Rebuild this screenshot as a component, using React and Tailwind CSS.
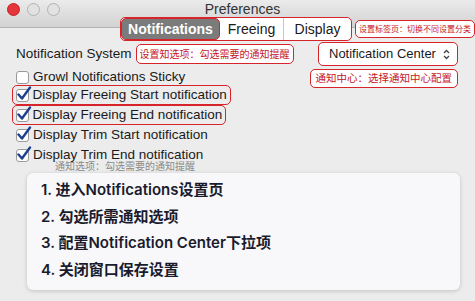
import React from "react";

const FONT = { fontFamily: '"Liberation Sans", "Noto Sans CJK SC", sans-serif' };
const CJK = { fontFamily: '"Noto Sans CJK SC", sans-serif' };
const CARD = { fontFamily: 'Inter, "Noto Sans CJK SC", sans-serif' };

const Check = ({ checked }) => (
  <span className="relative inline-block w-[13px] h-[13px] bg-white border border-[#9a9a9a] rounded-[3px] shrink-0">
    {checked && (
      <svg className="absolute -top-[4px] -left-[1px]" width="16" height="16" viewBox="0 0 16 16">
        <path d="M2.5 8.5 L6 12.5 L14 1.5" fill="none" stroke="#1d3f8f" strokeWidth="2.4" strokeLinecap="round" strokeLinejoin="round" />
      </svg>
    )}
  </span>
);

const Row = ({ label, checked, marked }) => (
  <div
    className={`flex items-center gap-[4px] h-[20px] whitespace-nowrap ${
      marked ? "border-[1.5px] border-[#d7242b] rounded-[5px] -ml-[4px] pl-[2.5px] pr-[3px] w-fit" : ""
    }`}
  >
    <Check checked={checked} />
    <span className="text-[13.5px] text-[#1a1a1a] leading-none">{label}</span>
  </div>
);

const Note = ({ children, className }) => (
  <span
    className={`inline-flex items-center whitespace-nowrap border-[1.5px] border-[#d7242b] rounded-[5px] bg-white text-[#c8161e] leading-none ${className}`}
    style={CJK}
  >
    {children}
  </span>
);

export default function App() {
  const steps = [
    "1. 进入Notifications设置页",
    "2. 勾选所需通知选项",
    "3. 配置Notification Center下拉项",
    "4. 关闭窗口保存设置",
  ];

  return (
    <div className="w-[475px] h-[301px] bg-[#ececec] overflow-hidden" style={FONT}>
      {/* Title bar */}
      <div className="h-[28px] bg-gradient-to-b from-[#ebebeb] to-[#d2d2d2] border-b border-[#b5b5b5] flex items-start pl-[7px] pt-[3px]">
        <div className="flex gap-[7px]">
          <span className="w-[13px] h-[13px] rounded-full bg-[#e5343a] border border-[#c4222a]" />
          <span className="w-[13px] h-[13px] rounded-full bg-[#e2e2e2] border border-[#b2b2b2]" />
          <span className="w-[13px] h-[13px] rounded-full bg-[#e2e2e2] border border-[#b2b2b2]" />
        </div>
        <div className="flex-1 text-center text-[14px] text-[#333] leading-none -mt-[1px] pr-[50px]">Preferences</div>
      </div>

      {/* Tabs */}
      <div className="flex items-center -mt-[11px] pl-[120px]">
        <div className="flex h-[24px] w-[232px] border-[1.5px] border-[#d7242b] rounded-[5px] bg-white overflow-hidden">
          <div className="w-[99px] flex items-center justify-center bg-[#7b7b7b] text-white text-[14px] font-bold border-[1.5px] border-[#d7242b] rounded-[5px]">
            Notifications
          </div>
          <div className="w-[64px] flex items-center justify-center text-[14px] text-[#1a1a1a] border-r border-[#c8c8c8]">
            Freeing
          </div>
          <div className="flex-1 flex items-center justify-center text-[14px] text-[#1a1a1a]">Display</div>
        </div>
        <Note className="ml-[3px] h-[18px] px-[3px] text-[8px]">设置标签页：切换不同设置分类</Note>
      </div>

      {/* Notification system */}
      <div className="flex items-center mt-[1px] pl-[16px] pr-[17px] h-[24px]">
        <span className="text-[13.5px] text-[#1a1a1a] whitespace-nowrap">Notification System</span>
        <Note className="ml-[4px] h-[20px] px-[3px] text-[10px]">设置知选项：勾选需要的通知提醒</Note>
        <div className="ml-auto w-[140px] h-[24px] flex items-center justify-between pl-[10px] pr-[7px] bg-white border-[1.5px] border-[#d7242b] rounded-[5px] text-[13px] text-[#1a1a1a] whitespace-nowrap">
          <span>Notification Center</span>
          <svg width="7" height="11" viewBox="0 0 7 11">
            <path d="M1 4 L3.5 1.5 L6 4 M1 7 L3.5 9.5 L6 7" fill="none" stroke="#444" strokeWidth="1.3" />
          </svg>
        </div>
      </div>

      {/* Checkboxes */}
      <div className="flex justify-between items-start pl-[16px] pr-[17px]">
        <div className="pt-[1px]">
          <Row label="Growl Notifications Sticky" />
        </div>
        <Note className="mt-[3px] h-[19px] px-[5px] text-[10.5px]">通知中心：选择通知中心配置</Note>
      </div>
      <div className="flex flex-col pl-[16px] -mt-[3px]">
        <Row label="Display Freeing Start notification" checked marked />
        <Row label="Display Freeing End notification" checked marked />
        <Row label="Display Trim Start notification" checked />
        <Row label="Display Trim End notification" checked />
      </div>
      <div className="pl-[55px] text-[10px] text-[#8a8a8a] leading-none -mt-[4px]" style={CJK}>
        通知选项：勾选需要的通知提醒
      </div>

      {/* Steps card */}
      <div className="mt-[2px] ml-[27px] w-[433px] h-[117px] bg-[#f8f8fa] rounded-[6px] shadow-[0_1px_4px_rgba(0,0,0,0.18)] pl-[14px] pt-[4px]">
        {steps.map((s) => (
          <div
            key={s}
            className="h-[26.5px] flex items-center text-[15px] font-semibold text-[#1b1b2e] whitespace-nowrap"
            style={CARD}
          >
            {s}
          </div>
        ))}
      </div>
    </div>
  );
}
